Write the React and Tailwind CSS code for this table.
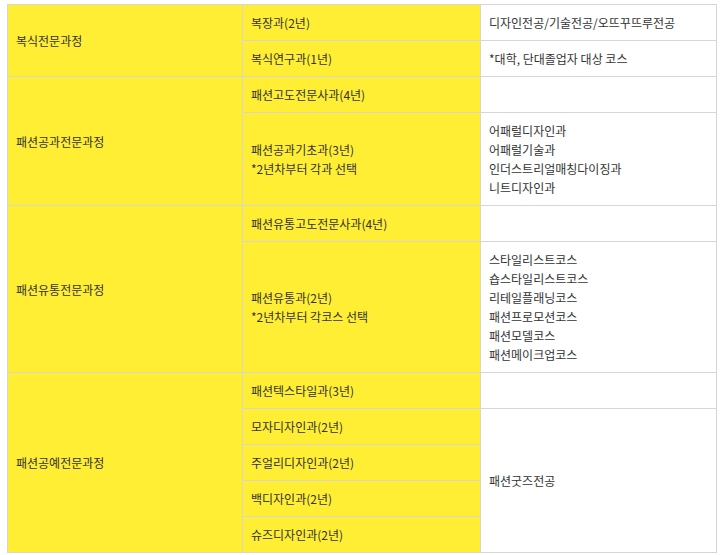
const yellow = 'bg-[#ffee33]';
const cell = 'border border-[#d6d6d6] px-2 py-2 align-middle text-left';

const groups = [
  {
    name: '복식전문과정',
    rows: [
      { course: ['복장과(2년)'], note: ['디자인전공/기술전공/오뜨꾸뜨루전공'] },
      { course: ['복식연구과(1년)'], note: ['*대학, 단대졸업자 대상 코스'] },
    ],
  },
  {
    name: '패션공과전문과정',
    rows: [
      { course: ['패션고도전문사과(4년)'], note: [] },
      {
        course: ['패션공과기초과(3년)', '*2년차부터 각과 선택'],
        note: ['어패럴디자인과', '어패럴기술과', '인더스트리얼매칭다이징과', '니트디자인과'],
      },
    ],
  },
  {
    name: '패션유통전문과정',
    rows: [
      { course: ['패션유통고도전문사과(4년)'], note: [] },
      {
        course: ['패션유통과(2년)', '*2년차부터 각코스 선택'],
        note: ['스타일리스트코스', '숍스타일리스트코스', '리테일플래닝코스', '패션프로모션코스', '패션모델코스', '패션메이크업코스'],
      },
    ],
  },
  {
    name: '패션공예전문과정',
    rows: [
      { course: ['패션텍스타일과(3년)'], note: [] },
      { course: ['모자디자인과(2년)'], note: ['패션굿즈전공'], span: 4 },
      { course: ['주얼리디자인과(2년)'], skip: true },
      { course: ['백디자인과(2년)'], skip: true },
      { course: ['슈즈디자인과(2년)'], skip: true },
    ],
  },
];

const Lines = ({ lines }) => (
  <>
    {lines.map((l, i) => (
      <div key={i}>{l}</div>
    ))}
  </>
);

export default function App() {
  return (
    <div className="bg-white w-[724px] h-[555px] pt-1 pl-[7px]">
      <table
        className="table-fixed border-collapse w-[710px] text-[12px] leading-[19px] text-[#333]"
        style={{ fontFamily: '"Malgun Gothic", "Noto Sans CJK KR", "Noto Sans", sans-serif' }}
      >
        <colgroup>
          <col className="w-[235px]" />
          <col className="w-[238px]" />
          <col />
        </colgroup>
        <tbody>
          {groups.map((g) =>
            g.rows.map((r, i) => (
              <tr key={g.name + i}>
                {i === 0 && (
                  <td rowSpan={g.rows.length} className={`${cell} ${yellow}`}>
                    {g.name}
                  </td>
                )}
                <td className={`${cell} ${yellow}`}>
                  <Lines lines={r.course} />
                </td>
                {!r.skip && (
                  <td rowSpan={r.span || 1} className={`${cell} bg-white`}>
                    <Lines lines={r.note} />
                  </td>
                )}
              </tr>
            ))
          )}
        </tbody>
      </table>
    </div>
  );
}
